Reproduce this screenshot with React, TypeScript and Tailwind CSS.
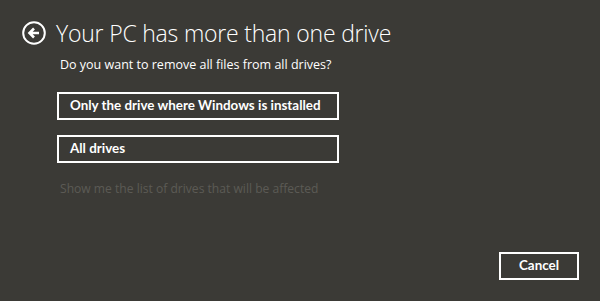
import React from "react";

export default function App() {
  return (
    <div
      className="w-[600px] h-[301px] bg-[#3b3a36] text-white overflow-hidden flex flex-col"
      style={{ fontFamily: '"Open Sans", "Noto Sans", sans-serif' }}
    >
      <div className="flex items-center pl-[22px] pt-[20px] gap-[10px]">
        <svg width="24" height="24" viewBox="0 0 24 24" className="shrink-0">
          <circle cx="12" cy="12" r="10.8" fill="none" stroke="white" strokeWidth="2" />
          <path d="M17 12H8.5M12 7.5L7.5 12L12 16.5" fill="none" stroke="white" strokeWidth="2.6" strokeLinecap="butt" strokeLinejoin="miter" />
        </svg>
        <h1 className="text-[23px] font-light leading-[26px] tracking-[-0.2px]">Your PC has more than one drive</h1>
      </div>
      <div className="pl-[60px] mt-[10px] text-[12.5px] leading-[18px] text-white whitespace-nowrap">
        Do you want to remove all files from all drives?
      </div>
      <div className="pl-[57px] mt-[18px] flex flex-col gap-[15px]" style={{ fontFamily: 'Lato, sans-serif' }}>
        <button className="w-[282px] h-[28px] border-2 border-white text-left pl-[11px] text-[13.4px] font-bold leading-none whitespace-nowrap">
          Only the drive where Windows is installed
        </button>
        <button className="w-[282px] h-[28px] border-2 border-white text-left pl-[11px] text-[13.4px] font-bold leading-none">
          All drives
        </button>
      </div>
      <div className="pl-[60px] mt-[17px] text-[12.1px] leading-[18px] text-[#5c5a55] whitespace-nowrap">
        Show me the list of drives that will be affected
      </div>
      <div className="flex justify-end pr-[21px] mt-auto mb-[21px]" style={{ fontFamily: 'Lato, sans-serif' }}>
        <button className="w-[80px] h-[28px] border-2 border-white text-[13.4px] font-bold leading-none">
          Cancel
        </button>
      </div>
    </div>
  );
}
